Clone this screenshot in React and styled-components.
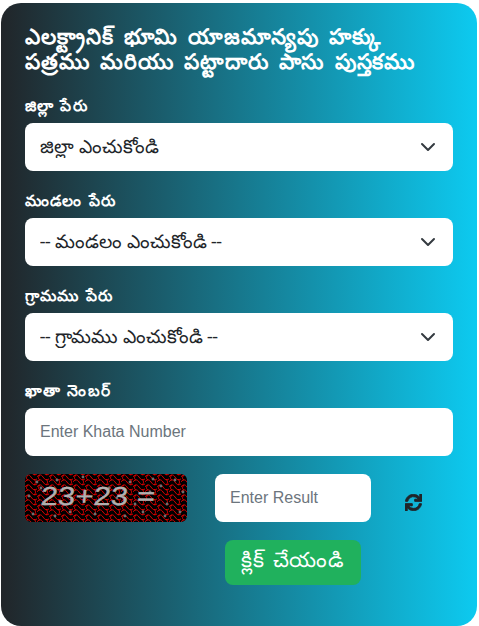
import React from "react";
import styled, { createGlobalStyle } from "styled-components";
import { FaSync } from "react-icons/fa";

const Global = createGlobalStyle`
  html, body { margin: 0; padding: 0; background: #fff; }
  body { font-family: "Roboto", "Noto Sans", "Liberation Sans", sans-serif; }
`;

const Page = styled.div`
  width: 479px;
  height: 626px;
  padding: 3px 2px 0 1px;
  box-sizing: border-box;
  overflow: hidden;
`;

const Card = styled.form`
  box-sizing: border-box;
  height: 623px;
  padding: 21px 24px 0;
  border-radius: 20px;
  background: linear-gradient(to right, #212529, #0dcaf0);
  display: flex;
  flex-direction: column;
`;

const Title = styled.h1`
  margin: 0 0 25px;
  font-size: 21.5px;
  line-height: 25px;
  font-weight: 600;
  letter-spacing: 0.95px;
  word-spacing: 4px;
  color: #fff;
  white-space: nowrap;
`;

const Fields = styled.div`
  display: flex;
  flex-direction: column;
  gap: 23px;
  margin-bottom: 18px;
`;

const Field = styled.div`
  display: flex;
  flex-direction: column;
`;

const Label = styled.label`
  height: 14px;
  line-height: 14px;
  margin-bottom: 10px;
  font-size: 15.5px;
  font-weight: 700;
  letter-spacing: 1.2px;
  word-spacing: 1px;
  color: #fff;
  white-space: nowrap;
`;

const SelectBox = styled.select`
  appearance: none;
  height: 48px;
  border: 0;
  border-radius: 8px;
  background: #fff url("data:image/svg+xml,%3csvg xmlns='http://www.w3.org/2000/svg' viewBox='0 0 16 16'%3e%3cpath fill='none' stroke='%23343a40' stroke-linecap='round' stroke-linejoin='round' stroke-width='2' d='m2 5 6 6 6-6'/%3e%3c/svg%3e") no-repeat right 17px center / 16px 16px;
  padding: 0 40px 0 15px;
  font-family: inherit;
  font-size: 18.8px;
  color: #212529;
`;

const TextInput = styled.input`
  box-sizing: border-box;
  height: 48px;
  width: ${(p) => p.$width || "100%"};
  border: 0;
  border-radius: 8px;
  background: #fff;
  padding: 0 15px;
  font-family: "Liberation Sans", Arial, sans-serif;
  font-size: 16px;
  color: #212529;
  &::placeholder { color: #6c757d; opacity: 1; }
`;

const CaptchaRow = styled.div`
  display: flex;
  align-items: flex-start;
`;

const Captcha = styled.svg`
  width: 162px;
  height: 48px;
  border-radius: 6px;
  flex: none;
  margin-right: 28px;
  display: block;
`;

const Refresh = styled.button`
  border: 0;
  background: none;
  padding: 0;
  margin: 19px 0 0 33px;
  width: 18px;
  height: 18px;
  color: #212529;
  font-size: 17px;
  display: flex;
  align-items: center;
  justify-content: center;
  svg { stroke: currentColor; stroke-width: 24px; }
`;

const Submit = styled.button`
  align-self: flex-start;
  margin: 18px 0 0 200px;
  width: 136px;
  height: 45px;
  border: 0;
  border-radius: 8px;
  background: #20b15d;
  color: #fff;
  font-family: inherit;
  font-size: 21px;
  letter-spacing: 0.7px;
  word-spacing: 2px;
  white-space: nowrap;
  padding: 0;
`;

const dots = [[12,8],[32,6],[58,3],[84,14],[105,8],[128,5],[150,6],[158,18],[4,22],[20,30],[45,38],[70,40],[92,24],[110,30],[125,18],[142,30],[155,38],[30,42],[16,14],[140,42],[118,38],[8,40],[100,42],[136,12]];

export default function App() {
  return (
    <>
      <Global />
      <Page>
        <Card>
          <Title>ఎలక్ట్రానిక్ భూమి యాజమాన్యపు హక్కు<br />పత్రము మరియు పట్టాదారు పాసు పుస్తకము</Title>
          <Fields>
            <Field>
              <Label>జిల్లా పేరు</Label>
              <SelectBox><option>జిల్లా ఎంచుకోండి</option></SelectBox>
            </Field>
            <Field>
              <Label>మండలం పేరు</Label>
              <SelectBox><option>-- మండలం ఎంచుకోండి --</option></SelectBox>
            </Field>
            <Field>
              <Label>గ్రామము పేరు</Label>
              <SelectBox><option>-- గ్రామము ఎంచుకోండి --</option></SelectBox>
            </Field>
            <Field>
              <Label>ఖాతా నెంబర్</Label>
              <TextInput placeholder="Enter Khata Number" />
            </Field>
          </Fields>
          <CaptchaRow>
            <Captcha viewBox="0 0 162 48">
              <defs>
                <pattern id="mesh" width="12" height="10" patternUnits="userSpaceOnUse">
                  <rect width="12" height="10" fill="#000" />
                  <path d="M-1 4 C2 0 4 0 6 3 S10 7 13 4 M-1 9 C2 5 4 5 6 8 S10 12 13 9 M-1 -1 C2 -5 4 -5 6 -2 S10 2 13 -1 M3 1 C1 3 1 5 3 6 M9 5 C11 7 11 9 9 11 M9 -5 C11 -3 11 -1 9 1" fill="none" stroke="#f20000" strokeWidth="0.9" />
                </pattern>
              </defs>
              <rect width="162" height="48" fill="url(#mesh)" />
              {dots.map(([x, y], i) => (
                <circle key={i} cx={x} cy={y} r="1.4" fill="#6e6e6e" />
              ))}
              <text transform="translate(15 31) scale(1.2 1) skewX(-4)" fontFamily="Liberation Sans, sans-serif" fontSize="26" fill="#b0b0b0" stroke="#b0b0b0" strokeWidth="0.3">23+23 =</text>
            </Captcha>
            <TextInput $width="156px" placeholder="Enter Result" />
            <Refresh type="button" aria-label="refresh"><FaSync /></Refresh>
          </CaptchaRow>
          <Submit type="button">క్లిక్ చేయండి</Submit>
        </Card>
      </Page>
    </>
  );
}
